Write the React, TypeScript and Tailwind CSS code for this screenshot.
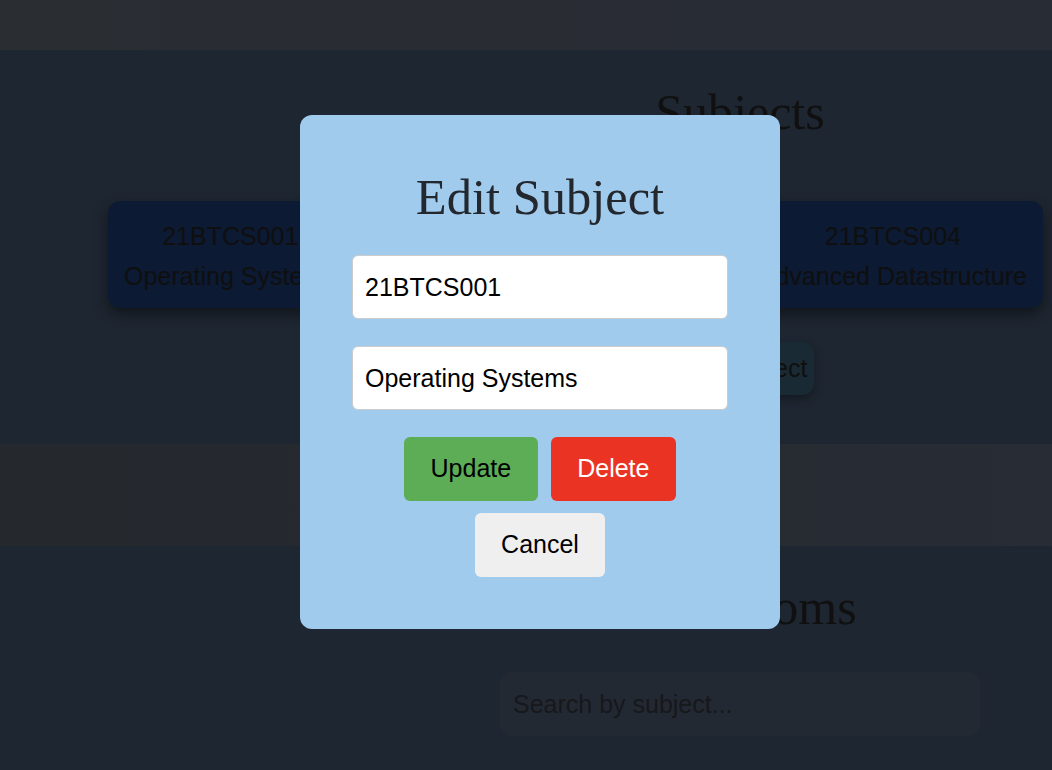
import { useState } from "react";

const subjects = [
  { code: "21BTCS001", name: "Operating Systems" },
  { code: "21BTCS002", name: "Computer Networks" },
  { code: "21BTCS004", name: "Advanced Datastructure" },
];

const sans = "font-['Liberation_Sans',Arial,sans-serif]";
const serif = "font-['Liberation_Serif','Times_New_Roman',serif]";

const App = () => {
  const [code, setCode] = useState("21BTCS001");
  const [name, setName] = useState("Operating Systems");

  return (
    <div className={`relative min-h-screen h-[770px] overflow-hidden ${sans}`}>
      {/* page behind the modal */}
      <div className="h-[50px] bg-gradient-to-r from-[#545a64] to-[#50586a]" />

      <section className="bg-[#3c4c62] pt-[35px] pb-[49px] flex flex-col">
        <div className="pl-[428px] flex justify-center">
          <h1 className={`${serif} text-[50px] leading-[55px] text-[#202020]`}>Subjects</h1>
        </div>

        <div className="mt-[61px] pl-[108px] pr-[9px] flex justify-between">
          {subjects.map((s) => (
            <div
              key={s.code}
              className="bg-[#183466] rounded-[12px] px-[16px] pt-[21px] pb-[17px] flex flex-col gap-[11px] items-center text-[25px] leading-[29px] text-[#1e1e1e] shadow-[0_6px_14px_rgba(0,0,0,0.45)]"
            >
              <span>{s.code}</span>
              <span>{s.name}</span>
            </div>
          ))}
        </div>

        <div className="pl-[428px] mt-[34px] flex justify-center">
          <button className="bg-[#325468] rounded-[12px] px-[7px] py-[12px] text-[25px] leading-[29px] text-[#1e1e1e] shadow-[0_4px_10px_rgba(0,0,0,0.35)]">
            Add Subject
          </button>
        </div>
      </section>

      <div className="h-[102px] bg-gradient-to-r from-[#4a525c] to-[#505868]" />

      <section className="bg-[#3c4c62] pt-[34px] pb-[60px] flex flex-col pl-[428px] items-center">
        <h1 className={`${serif} text-[50px] leading-[55px] text-[#202020]`}>Classrooms</h1>
        <input
          placeholder="Search by subject..."
          className="mt-[37px] w-[480px] h-[64px] rounded-[10px] bg-[#465266] px-[13px] text-[25px] placeholder:text-[#2e3036] outline-none"
        />
      </section>

      {/* overlay */}
      <div className="absolute inset-0 bg-black/50">
        <div className="absolute left-[300px] top-[115px] w-[480px] bg-[#a0cbec] rounded-[12px] pt-[55px] pb-[46px] px-[52px] flex flex-col">
          <h2 className={`${serif} text-center text-[50.5px] leading-[55px] text-[#23272e]`}>Edit Subject</h2>
          <input
            value={code}
            onChange={(e) => setCode(e.target.value)}
            className="mt-[30px] h-[64px] bg-white border border-[#cccccc] rounded-[6px] px-[12px] text-[25px] text-black outline-none"
          />
          <input
            value={name}
            onChange={(e) => setName(e.target.value)}
            className="mt-[27px] h-[64px] bg-white border border-[#cccccc] rounded-[6px] px-[12px] text-[25px] text-black outline-none"
          />
          <div className="mt-[21px] flex flex-wrap justify-center">
            <button className="mx-[6.5px] my-[6px] h-[64px] px-[26.5px] rounded-[6px] bg-[#5cad55] text-black text-[25px]">
              Update
            </button>
            <button className="mx-[6.5px] my-[6px] h-[64px] px-[26.5px] rounded-[6px] bg-[#eb3324] text-white text-[25px]">
              Delete
            </button>
            <button className="mx-[6.5px] my-[6px] h-[64px] px-[26px] rounded-[6px] bg-[#efefef] text-black text-[25px]">
              Cancel
            </button>
          </div>
        </div>
      </div>
    </div>
  );
};

export default App;
